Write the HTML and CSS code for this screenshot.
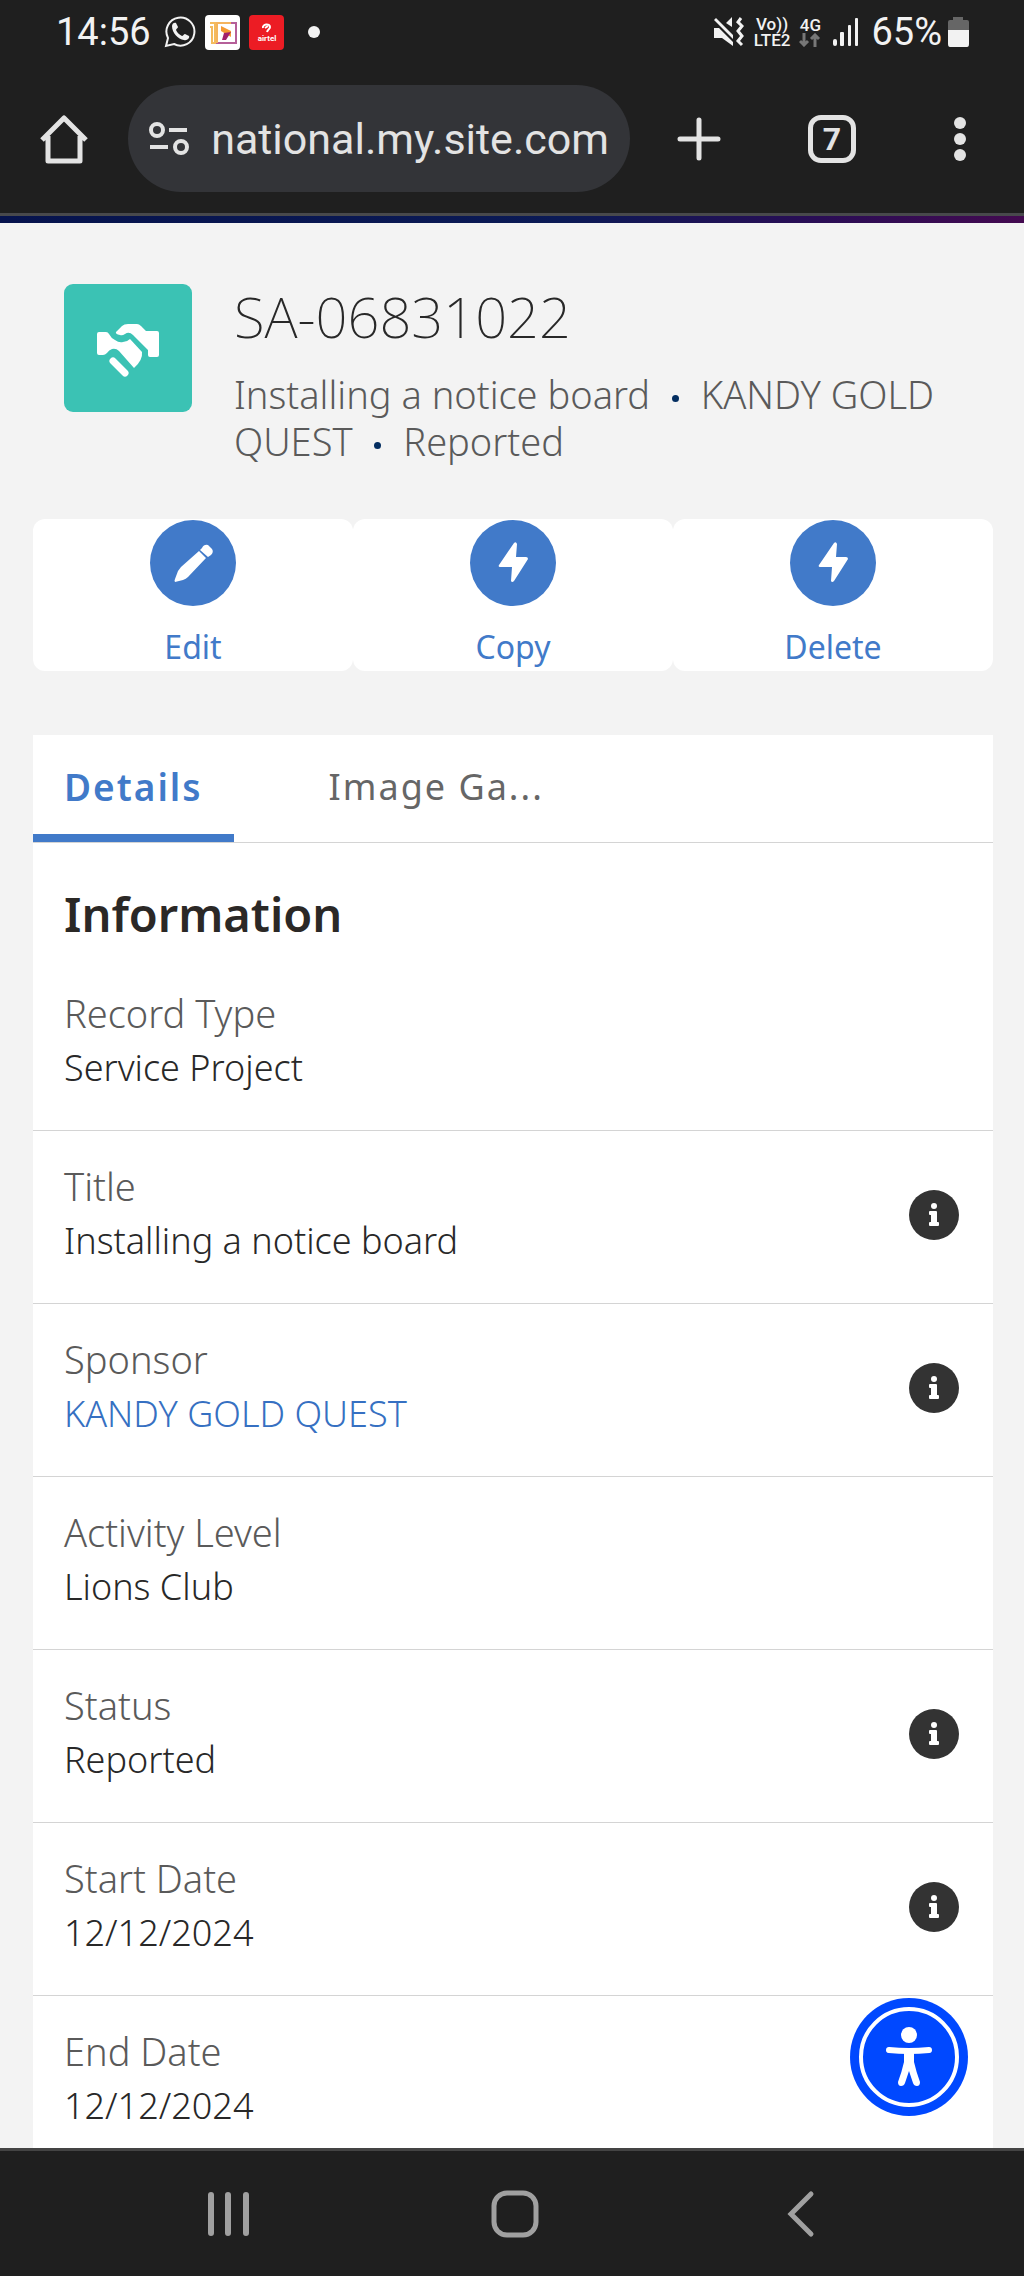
FILE: index.html
```html
<!DOCTYPE html>
<html lang="en">
<head>
<meta charset="utf-8">
<meta name="viewport" content="width=device-width, initial-scale=1">
<title>SA-06831022</title>
<link rel="stylesheet" href="styles.css">
</head>
<body>
<header class="chrome">
  <div class="status">
    <div class="status-left">
      <span class="time">14:56</span>
      <svg class="whatsapp" width="32" height="34" viewBox="0 0 32 34" fill="none" stroke="#f2f2f2" stroke-width="2">
        <path d="M2 31l2-8A14 14 0 1 1 10 29z"/>
        <path fill="#f2f2f2" stroke="none" d="M8 11c0-3 3-4 4-3l2 4c0 1-2 2-2 3 1 3 4 5 6 6 1 0 2-2 3-2l4 2c1 2-2 5-5 4C14 24 8 18 8 11z"/>
      </svg>
      <svg class="app" width="35" height="35" viewBox="0 0 35 35">
        <rect width="35" height="35" rx="4" fill="#fff"/>
        <path d="M5 8h5v20M5 12h2v16h6" fill="none" stroke="#f4bb5e" stroke-width="2"/>
        <path d="M12 8v20h19V8z" fill="none" stroke="#b55f99" stroke-width="2"/>
        <path d="M12 28V8h14" fill="none" stroke="#f4b45e" stroke-width="2"/>
        <path d="M16 11l10 5v6l-10-6z" fill="#f59a32"/>
        <path d="M19 18l7-1-5 8h-4z" fill="#a1206b"/>
      </svg>
      <svg class="app" width="35" height="35" viewBox="0 0 35 35">
        <rect width="35" height="35" rx="4" fill="#ec1c24"/>
        <path d="M14 13c-1-4 7-5 7-1 0 2-2 2-3 5M16 13l3-2" fill="none" stroke="#fff" stroke-width="2"/>
        <text x="18" y="26" class="airtel" text-anchor="middle">airtel</text>
      </svg>
      <span class="more-dot"></span>
    </div>
    <div class="status-right">
      <svg width="30" height="30" viewBox="0 0 30 30" fill="#f2f2f2">
        <path d="M0 11h5l14 14v4L8 21H0zM2 1l17 17v4L0 3zM12 6l6-6v10z"/>
        <path d="M27 1l-3 4 4 4-4 5 4 5-4 5 4 4" fill="none" stroke="#f2f2f2" stroke-width="3"/>
      </svg>
      <span class="stack volte"><b>Vo))</b><b>LTE2</b></span>
      <span class="stack net"><b>4G</b>
        <svg width="22" height="14" viewBox="0 0 22 14" fill="none" stroke="#777" stroke-width="3"><path d="M5 0v12M1 8l4 4 4-4M16 14V2M12 6l4-4 4 4"/></svg>
      </span>
      <svg class="signal" width="26" height="28" viewBox="0 0 26 28" fill="#f2f2f2"><rect y="21" width="4" height="7" rx="2"/><rect x="7" y="14" width="4" height="14" rx="1"/><rect x="15" y="7" width="3" height="21" rx="1"/><rect x="22" width="3" height="28" rx="1"/></svg>
      <span class="battery-text">65%</span>
      <svg class="battery" width="21" height="30" viewBox="0 0 21 30"><path d="M5 0h10v3h4q2 0 2 2v8H0V5q0-2 2-2h3z" fill="#666"/><path d="M0 13h21v14q0 3-2 3H2q-2 0-2-3z" fill="#f2f2f2"/></svg>
    </div>
  </div>
  <div class="toolbar">
    <button class="tool" aria-label="Home">
      <svg width="50" height="50" viewBox="0 0 50 50" fill="none" stroke="#e3e3e3" stroke-width="5" stroke-linejoin="round"><path d="M3 26L25 4l22 22M9 22v25h32V22"/></svg>
    </button>
    <label class="address">
      <svg width="40" height="36" viewBox="0 0 40 36" fill="none" stroke="#e3e3e3" stroke-width="4"><circle cx="8" cy="9" r="6"/><path d="M20 9h18M1 26h18"/><circle cx="32" cy="26" r="6"/></svg>
      <input type="text" aria-label="Address" value="rnational.my.site.com">
    </label>
    <button class="tool new-tab" aria-label="New tab">
      <svg width="44" height="44" viewBox="0 0 44 44" stroke="#e3e3e3" stroke-width="5" stroke-linecap="round"><path d="M22 3v38M3 22h38"/></svg>
    </button>
    <button class="tool" aria-label="7 open tabs"><span class="tab-count">7</span></button>
    <button class="tool" aria-label="Menu">
      <svg width="12" height="44" viewBox="0 0 12 44" fill="#e3e3e3"><circle cx="6" cy="6" r="6"/><circle cx="6" cy="22" r="6"/><circle cx="6" cy="38" r="6"/></svg>
    </button>
  </div>
</header>

<main class="page">
  <section class="record">
    <div class="record-icon">
      <svg width="64" height="60" viewBox="0 0 64 60" fill="#fff">
        <path d="M3 14h7q2 0 3 2 2 4 6 6 4 3 8 2 4 0 7-3l12 13q1 8-8 16L23 33q-3-3-7-2-3 1-5 4-2 2-4 2H3q-2 0-2-2V16q0-2 2-2z"/>
        <path d="M20 14l6-6q2-2 6-2h9q2 0 4 2l5 5h11q2 0 2 2v22q0 2-2 2h-7q-2 0-2-2v-5L37 17q-4-4-8-1-3 2-5 1-5-1-4-3z"/>
        <path d="M17 43l12 12" stroke="#fff" stroke-width="7" stroke-linecap="round"/>
      </svg>
    </div>
    <div class="record-text">
      <h1>SA-06831022</h1>
      <p>Installing a notice board <span class="sep"></span> KANDY GOLD QUEST <span class="sep"></span> Reported</p>
    </div>
  </section>

  <div class="actions">
    <button class="action"><span class="disc">
      <svg width="42" height="42" viewBox="0 0 42 42" fill="#fff"><path d="M27 9l7 7-18 19q-2 2-5 3l-8 2q-1-1 0-3l3-8 3-4zM30 6q2-4 6-3l4 4q2 3-1 6l-3 2-8-7z"/></svg></span>Edit</button>
    <button class="action"><span class="disc">
      <svg width="30" height="42" viewBox="0 0 30 42" fill="#fff"><path d="M16 1L1 23q-1 2 1 2h12l-1 14q1 2 3 0l14-22q0-2-2-2H18l1-13q-1-3-3-1z"/></svg></span>Copy</button>
    <button class="action"><span class="disc">
      <svg width="30" height="42" viewBox="0 0 30 42" fill="#fff"><path d="M16 1L1 23q-1 2 1 2h12l-1 14q1 2 3 0l14-22q0-2-2-2H18l1-13q-1-3-3-1z"/></svg></span>Delete</button>
  </div>

  <section class="card">
    <div class="tabs" role="tablist">
      <button class="tab active" role="tab" aria-selected="true">Details</button>
      <button class="tab" role="tab" aria-selected="false">Image Ga...</button>
    </div>
    <h2>Information</h2>
    <dl class="fields">
      <div class="field"><dt>Record Type</dt><dd>Service Project</dd></div>
      <div class="field"><dt>Title</dt><dd>Installing a notice board</dd><dd class="help"><button class="info" aria-label="Help for Title"><svg width="50" height="50" viewBox="0 0 50 50"><use href="#info"/></svg></button></dd></div>
      <div class="field"><dt>Sponsor</dt><dd><a href="#sponsor">KANDY GOLD QUEST</a></dd><dd class="help"><button class="info" aria-label="Help for Sponsor"><svg width="50" height="50" viewBox="0 0 50 50"><use href="#info"/></svg></button></dd></div>
      <div class="field"><dt>Activity Level</dt><dd>Lions Club</dd></div>
      <div class="field"><dt>Status</dt><dd>Reported</dd><dd class="help"><button class="info" aria-label="Help for Status"><svg width="50" height="50" viewBox="0 0 50 50"><use href="#info"/></svg></button></dd></div>
      <div class="field"><dt>Start Date</dt><dd>12/12/2024</dd><dd class="help"><button class="info" aria-label="Help for Start Date"><svg width="50" height="50" viewBox="0 0 50 50"><use href="#info"/></svg></button></dd></div>
      <div class="field"><dt>End Date</dt><dd>12/12/2024</dd></div>
    </dl>
  </section>
</main>

<button class="accessibility" aria-label="Accessibility menu">
  <svg width="118" height="118" viewBox="0 0 118 118">
    <circle cx="59" cy="59" r="59" fill="#0048ff"/>
    <circle cx="59" cy="59" r="48" fill="none" stroke="#fff" stroke-width="4"/>
    <circle cx="59" cy="37" r="8" fill="#fff"/>
    <path d="M39 52q20 2 40 0" fill="none" stroke="#fff" stroke-width="6" stroke-linecap="round"/>
    <path d="M54 53h10v11q2 9 6 20 0 4-3 4-3 0-4-3l-4-12-4 12q-1 3-4 3-3 0-3-4 4-11 6-20z" fill="#fff"/>
  </svg>
</button>

<nav class="navbar">
  <button aria-label="Recent apps"><svg width="50" height="50" viewBox="0 0 50 50" stroke="#a0a0a0" stroke-width="6" stroke-linecap="round"><path d="M8 6v38M25 6v38M43 6v38"/></svg></button>
  <button aria-label="Home screen"><svg width="50" height="50" viewBox="0 0 50 50" fill="none" stroke="#a0a0a0" stroke-width="5"><rect x="4" y="4" width="42" height="42" rx="13"/></svg></button>
  <button aria-label="Back"><svg width="50" height="50" viewBox="0 0 50 50" fill="none" stroke="#a0a0a0" stroke-width="5" stroke-linecap="round"><path d="M35 5L15 25l20 20"/></svg></button>
</nav>

<svg class="symbols" aria-hidden="true">
  <symbol id="info" viewBox="0 0 50 50">
    <circle cx="25" cy="25" r="25" fill="#333"/>
    <circle cx="25" cy="16" r="3" fill="#fff"/>
    <path fill="#fff" d="M21 21h6q1 0 1 1v10h1q1 0 1 1v2q0 1-1 1h-8q-1 0-1-1v-2q0-1 1-1h1v-7h-1q-1 0-1-1v-2q0-1 1-1z"/>
  </symbol>
</svg>
</body>
</html>
```
FILE: styles.css
```css
*,
*::before,
*::after {
  box-sizing: border-box;
}

body {
  position: relative;
  display: flex;
  flex-direction: column;
  min-height: 100vh;
  margin: 0;
  background: #f3f3f3;
  color: #282828;
  font-family: "Noto Sans", sans-serif;
}

button {
  padding: 0;
  border: 0;
  background: none;
  color: inherit;
  font: inherit;
}

svg {
  display: block;
  flex: none;
}

h1, h2, p, dl, dd {
  margin: 0;
}

/* Phone status bar and browser toolbar */
.chrome {
  background: #1f1f1f;
  color: #f2f2f2;
  font-family: Roboto, sans-serif;
}

.chrome::after {
  content: "";
  display: block;
  height: 10px;
  border-top: 3px solid #48494c;
  background: linear-gradient(90deg, #06134d 0%, #0b1a55 55%, #2a0d55 80%, #430a50 100%);
}

.status {
  display: flex;
  justify-content: space-between;
  height: 64px;
  padding: 0 55px 0 56px;
}

.status-left,
.status-right {
  display: flex;
  align-items: center;
}

.time,
.battery-text {
  font-size: 38px;
  line-height: 64px;
}

.whatsapp {
  margin-left: 13px;
}

.app {
  margin-left: 9px;
}

.airtel {
  fill: #fff;
  font-size: 8px;
  font-weight: 700;
}

.more-dot {
  width: 12px;
  height: 12px;
  margin-left: 24px;
  border-radius: 50%;
  background: #f2f2f2;
}

.stack {
  display: flex;
  flex-direction: column;
  align-items: center;
  font-size: 17px;
  line-height: 16px;
}

.stack b {
  font-weight: 500;
}

.volte {
  margin-left: 10px;
}

.net {
  margin-left: 9px;
}

.signal {
  margin: 0 12px;
}

.battery {
  margin-left: 6px;
}

.toolbar {
  display: flex;
  align-items: center;
  height: 149px;
}

.tool {
  display: flex;
  flex: none;
  align-items: center;
  justify-content: center;
  width: 128px;
  height: 128px;
}

.new-tab {
  margin: 0 5px;
}

.address {
  display: flex;
  flex: 1;
  align-items: center;
  gap: 22px;
  min-width: 0;
  height: 107px;
  padding: 0 21px;
  border-radius: 54px;
  background: #333438;
}

.address input {
  flex: 1;
  min-width: 0;
  padding: 0;
  border: 0;
  outline: 0;
  background: none;
  color: #e3e3e3;
  direction: rtl;
  font: 43px/60px Roboto, sans-serif;
}

.tab-count {
  width: 48px;
  height: 48px;
  border: 5px solid #e3e3e3;
  border-radius: 13px;
  color: #e3e3e3;
  font-size: 32px;
  font-weight: 700;
  line-height: 38px;
}

/* Record header */
.page {
  display: flex;
  flex: 1;
  flex-direction: column;
  padding: 61px 31px 0 33px;
}

.record {
  display: flex;
  gap: 42px;
  padding: 0 31px;
}

.record-icon {
  display: flex;
  flex: none;
  align-items: center;
  justify-content: center;
  width: 128px;
  height: 128px;
  border-radius: 9px;
  background: #3bc2b4;
}

.record h1 {
  font-size: 56px;
  font-weight: 200;
  line-height: 64px;
}

.record p {
  margin-top: 23px;
  color: #5a5a5a;
  font-size: 38px;
  font-weight: 300;
  line-height: 47px;
}

.sep {
  display: inline-block;
  width: 7px;
  height: 7px;
  margin: 0 12px;
  border-radius: 50%;
  background: #032d60;
  vertical-align: 7px;
}

.actions {
  display: grid;
  grid-template-columns: repeat(3, 1fr);
  margin: 54px 0 64px;
}

.action {
  display: flex;
  flex-direction: column;
  align-items: center;
  gap: 19px;
  padding: 1px 0 2px;
  border-radius: 12px;
  background: #fff;
  color: #417ac9;
  font-size: 32px;
  line-height: 44px;
}

.disc {
  display: flex;
  align-items: center;
  justify-content: center;
  width: 86px;
  height: 86px;
  border-radius: 50%;
  background: #417ac9;
}

/* Detail card */
.card {
  flex: 1;
  background: #fff;
}

.tabs {
  display: flex;
  gap: 64px;
  height: 108px;
  border-bottom: 1px solid #d4d4d4;
}

.tab {
  padding: 4px 31px 0;
  border-bottom: 8px solid transparent;
  color: #666;
  font-size: 36px;
  letter-spacing: 2px;
}

.tab.active {
  border-color: #417ac9;
  color: #417ac9;
  font-size: 37px;
  font-weight: 600;
}

h2 {
  padding: 39px 31px 12px;
  color: #2b2826;
  font-size: 47px;
  font-weight: 600;
  line-height: 64px;
}

.field {
  display: grid;
  grid-template-columns: 1fr auto;
  padding: 29px 34px 33px 31px;
  border-bottom: 1px solid #d4d4d4;
}

.field:last-child {
  padding-bottom: 0;
  border-bottom: 0;
}

.field dt {
  color: #5a5a5a;
  font-size: 38px;
  font-weight: 300;
  line-height: 52px;
}

.field dd {
  grid-column: 1;
  font-size: 36px;
  font-weight: 300;
  line-height: 58px;
}

.field a {
  color: #3670c2;
  text-decoration: none;
}

.field .help {
  grid-row: 1 / 3;
  grid-column: 2;
  align-self: center;
}

.info {
  display: block;
}

.accessibility {
  position: absolute;
  right: 56px;
  bottom: 160px;
}

.navbar {
  display: flex;
  justify-content: space-between;
  height: 128px;
  padding: 0 198px 0 203px;
  border-top: 3px solid #444;
  background: #1f1f1f;
}

.symbols {
  position: absolute;
  width: 0;
  height: 0;
}
```
